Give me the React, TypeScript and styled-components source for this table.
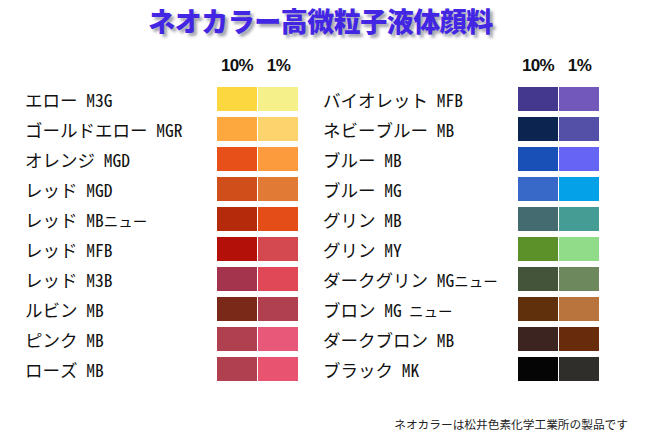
import React from "react";
import styled, { createGlobalStyle } from "styled-components";

const Global = createGlobalStyle`
  html, body { margin: 0; padding: 0; background: #ffffff; }
  body { width: 649px; height: 434px; overflow: hidden; }
`;

const Page = styled.div`
  width: 649px;
  height: 434px;
  box-sizing: border-box;
  display: flex;
  flex-direction: column;
  background: #fff;
`;

const Title = styled.h1`
  margin: 0;
  padding-top: 3px;
  height: 40px;
  text-align: center;
  padding-right: 8px;
  font-family: "Noto Sans CJK JP", sans-serif;
  font-weight: 900;
  font-size: 27px;
  line-height: 36px;
  letter-spacing: -0.5px;
  color: #4226e4;
  text-shadow: 3px 3px 3px rgba(90, 90, 110, 0.55);
`;

const Columns = styled.div`
  display: grid;
  grid-template-columns: 273px 275px;
  column-gap: 25px;
  padding-left: 25px;
  margin-top: 14px;
`;

const Column = styled.div<{ $label: number }>`
  display: grid;
  grid-template-columns: ${(p) => p.$label}px 40px 41px;
  grid-auto-rows: 24px;
  row-gap: 6px;
  align-items: center;
`;

const HeadRow = styled.div`
  grid-column: 1 / -1;
  display: grid;
  grid-template-columns: subgrid;
  height: 24px;
  margin-bottom: 6px;
`;

const Pct = styled.span<{ $col: number }>`
  grid-column: ${(p) => p.$col};
  text-align: center;
  font-family: "Liberation Sans", Arial, sans-serif;
  font-weight: 700;
  font-size: 17px;
  letter-spacing: -0.6px;
  line-height: 24px;
  color: #111;
  padding-left: ${(p) => (p.$col === 3 ? 2 : 0)}px;
`;

const Label = styled.span`
  font-family: "Noto Sans Mono CJK JP", "Noto Sans CJK JP", monospace;
  font-size: 17.5px;
  line-height: 24px;
  color: #111;
  white-space: pre;
  padding-top: 2px;
`;

const Suffix = styled.span`
  font-size: 14.5px;
  letter-spacing: 0px;
`;

const Swatch = styled.div<{ $c: string; $gap?: boolean }>`
  height: 24px;
  background: ${(p) => p.$c};
  margin-left: ${(p) => (p.$gap ? 1 : 0)}px;
`;

const Footer = styled.div`
  margin-top: auto;
  padding: 0 21px 2px 0;
  text-align: right;
  font-family: "Noto Sans CJK JP", sans-serif;
  font-size: 11.7px;
  line-height: 16px;
  color: #222;
`;

type Item = { name: string; code: string; suffix?: string; a: string; b: string };

const left: Item[] = [
  { name: "エロー", code: "M3G", a: "#fdd73f", b: "#f6f08a" },
  { name: "ゴールドエロー", code: "MGR", a: "#fda83f", b: "#fdd36e" },
  { name: "オレンジ", code: "MGD", a: "#e8501a", b: "#fc9a3e" },
  { name: "レッド", code: "MGD", a: "#d04e1a", b: "#e07a35" },
  { name: "レッド", code: "MB", suffix: "ニュー", a: "#b42a0a", b: "#e44c18" },
  { name: "レッド", code: "MFB", a: "#b4100a", b: "#d44850" },
  { name: "レッド", code: "M3B", a: "#a4344e", b: "#e04858" },
  { name: "ルビン", code: "MB", a: "#7a2818", b: "#b04050" },
  { name: "ピンク", code: "MB", a: "#b04050", b: "#e85878" },
  { name: "ローズ", code: "MB", a: "#b04050", b: "#e85470" },
];

const right: Item[] = [
  { name: "バイオレット", code: "MFB", a: "#43388e", b: "#7358bc" },
  { name: "ネビーブルー", code: "MB", a: "#0c2450", b: "#5450a8" },
  { name: "ブルー", code: "MB", a: "#1850b8", b: "#6664f4" },
  { name: "ブルー", code: "MG", a: "#3868c8", b: "#04a0e8" },
  { name: "グリン", code: "MB", a: "#446c70", b: "#449c94" },
  { name: "グリン", code: "MY", a: "#5c9028", b: "#90dc88" },
  { name: "ダークグリン", code: "MG", suffix: "ニュー", a: "#44543a", b: "#6c885c" },
  { name: "ブロン", code: "MG", suffix: " ニュー", a: "#60300c", b: "#b8743c" },
  { name: "ダークブロン", code: "MB", a: "#3c2420", b: "#682c0c" },
  { name: "ブラック", code: "MK", a: "#050505", b: "#302e2a" },
];

const ColorColumn: React.FC<{ items: Item[]; label: number }> = ({ items, label }) => (
  <Column $label={label}>
    <HeadRow>
      <Pct $col={2}>10%</Pct>
      <Pct $col={3}>1%</Pct>
    </HeadRow>
    {items.map((it, i) => (
      <React.Fragment key={i}>
        <Label>
          {it.name} {it.code}
          {it.suffix && <Suffix>{it.suffix}</Suffix>}
        </Label>
        <Swatch $c={it.a} />
        <Swatch $c={it.b} $gap />
      </React.Fragment>
    ))}
  </Column>
);

export default function App() {
  return (
    <Page>
      <Global />
      <Title>ネオカラー高微粒子液体顔料</Title>
      <Columns>
        <ColorColumn items={left} label={192} />
        <ColorColumn items={right} label={195} />
      </Columns>
      <Footer>ネオカラーは松井色素化学工業所の製品です</Footer>
    </Page>
  );
}
